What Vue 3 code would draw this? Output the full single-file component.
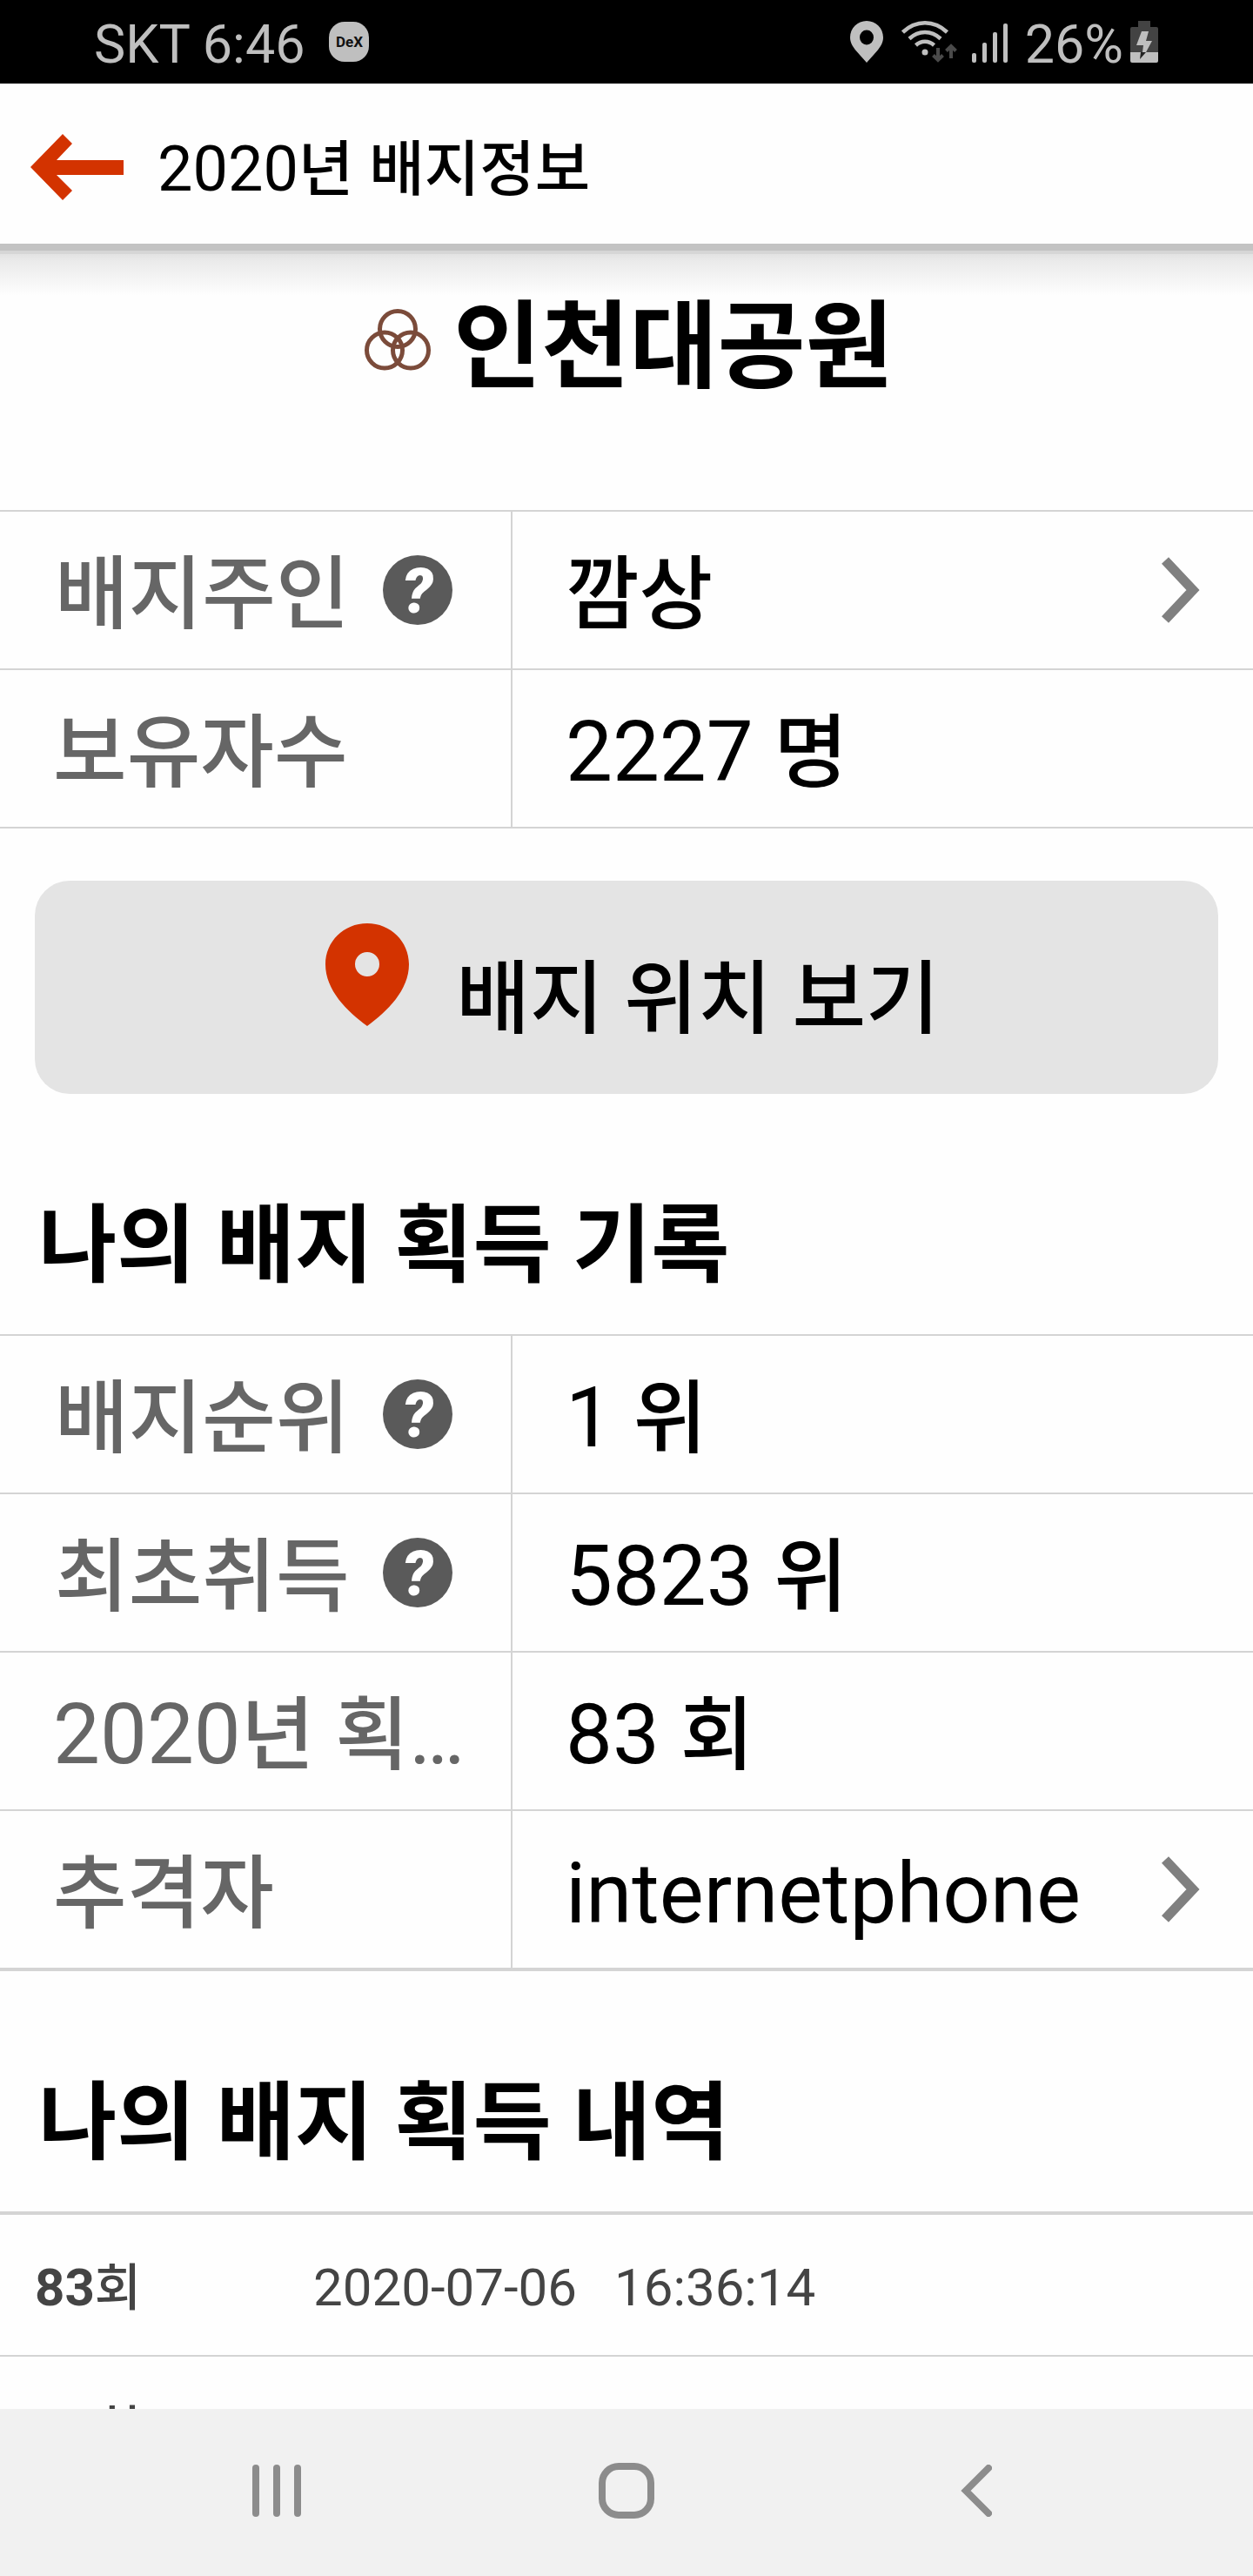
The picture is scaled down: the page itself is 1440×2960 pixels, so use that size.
<script setup>
import { h } from 'vue'

// Splits a string so that Hangul runs get their own optical size beside Latin digits.
const MixedText = (props) =>
  props.text
    .split(/([가-힣]+)/)
    .filter(Boolean)
    .map((run) => (/[가-힣]/.test(run) ? h('span', { class: 'ko' }, run) : run))
MixedText.props = ['text']

const badgeRows = [
  { label: '배지주인', help: true, value: '깜상', link: true },
  { label: '보유자수', value: '2227 명' },
]

const recordRows = [
  { label: '배지순위', help: true, value: '1 위' },
  { label: '최초취득', help: true, value: '5823 위' },
  { label: '2020년 획…', value: '83 회' },
  { label: '추격자', value: 'internetphone', link: true },
]

const tables = { badge: badgeRows, record: recordRows }

const history = [
  { count: '83회', date: '2020-07-06', time: '16:36:14' },
  { count: '82회', date: '', time: '' },
]

const InfoTable = (props) =>
  h(
    'table',
    { class: ['info', props.thick && 'thick'] },
    h(
      'tbody',
      tables[props.name].map((row) =>
        h('tr', [
          h(
            'th',
            { scope: 'row' },
            h('div', { class: 'cell' }, [
              h('span', { class: ['label', row.help && 'inset'] }, h(MixedText, { text: row.label })),
              row.help && h('button', { class: 'help', type: 'button' }, '?'),
            ])
          ),
          h(
            'td',
            h(row.link ? 'a' : 'div', { class: 'cell', href: row.link ? '#' : undefined }, [
              h('span', { class: 'value' }, h(MixedText, { text: row.value })),
              row.link &&
                h('svg', { class: 'chevron', viewBox: '0 0 44 76', width: 44, height: 76 }, [
                  h('path', {
                    d: 'M4 4 L36 38 L4 72',
                    fill: 'none',
                    stroke: '#808080',
                    'stroke-width': 11,
                  }),
                ]),
            ])
          ),
        ])
      )
    )
  )
InfoTable.props = ['name', 'thick']
</script>

<template>
  <div class="screen">
    <div class="status">
      <span class="status-text">SKT 6:46</span>
      <span class="dex">DeX</span>
      <svg class="s-pin" width="38" height="48" viewBox="0 0 38 48">
        <path fill="#bfbfbf" fill-rule="evenodd" d="M19 0C8.500 0 0 8.500 0 19c0 6 3 10.500 7 15.500L19 48l12-13.500c4-5 7-9.500 7-15.500C38 8.500 29.500 0 19 0zm0 10.500a8 8.500 0 1 1 0 17a8 8.500 0 1 1 0-17z" />
      </svg>
      <svg class="s-wifi" width="64" height="48" viewBox="0 0 64 48">
        <g fill="none" stroke="#bfbfbf" stroke-width="4.500">
          <path d="M1.500 13Q13 2.300 27 2.300T52.500 13" />
          <path d="M9 20.500Q17 13 27 13T45 20.500" />
          <path d="M16.500 28Q21 23.800 27 23.800T37.500 28" />
        </g>
        <circle cx="27" cy="36" r="3.500" fill="#bfbfbf" />
        <g fill="none" stroke="#4a4a4a" stroke-width="4">
          <path d="M42 31v14M36.500 39.500l5.500 5.500l5.500-5.500" />
          <path d="M57 43V29M51.500 34.500L57 29l5.500 5.500" />
        </g>
      </svg>
      <svg class="s-bars" width="41" height="48" viewBox="0 0 41 48" fill="#bfbfbf">
        <rect x="0" y="37" width="5" height="11" rx="2" />
        <rect x="12" y="25" width="5" height="23" rx="2" />
        <rect x="24" y="13" width="5" height="35" rx="2" />
        <rect x="36" y="3" width="5" height="45" rx="2" />
      </svg>
      <span class="status-text">26%</span>
      <svg class="s-battery" width="32" height="48" viewBox="0 0 32 48">
        <path fill="#434343" d="M9 0h14v7h7q2 0 2 2v27H0V9q0-2 2-2h7z" />
        <path fill="#bfbfbf" d="M0 36h32v10q0 2-2 2H2q-2 0-2-2z" />
        <path fill="#bfbfbf" d="M13 12h8l-3 11h7L18 36h-4l1-8H7z" />
        <path fill="#222" d="M12 36h6l-7 8z" />
      </svg>
    </div>

    <header class="appbar">
      <button class="back" type="button" aria-label="뒤로">
        <svg width="107" height="76" viewBox="0 0 107 76">
          <path fill="#d33300" d="M0 38L37 0l11 11L30 30h77v17H30l18 18l-11 11z" />
        </svg>
      </button>
      <span class="appbar-title"><MixedText text="2020년 배지정보" /></span>
    </header>

    <main class="content">
      <div class="shade"></div>
      <h1 class="badge-name">
        <svg width="76" height="71" viewBox="0 0 76 71" fill="none" stroke="#7b4b3a" stroke-width="5">
          <circle cx="38" cy="23" r="20.500" />
          <circle cx="23" cy="47.500" r="20.500" />
          <circle cx="53" cy="47.500" r="20.500" />
        </svg>
        <span>인천대공원</span>
      </h1>

      <InfoTable name="badge" />

      <button class="locate" type="button">
        <svg width="96" height="118" viewBox="0 0 96 118">
          <path fill="#d33300" fill-rule="evenodd" d="M48 0C21 0 0 21 0 47c0 30 25 54 48 71c23-17 48-41 48-71C96 21 75 0 48 0zm0 33a14 14 0 1 1 0 28a14 14 0 1 1 0-28z" />
        </svg>
        <span><MixedText text="배지 위치 보기" /></span>
      </button>

      <h2>나의 배지 획득 기록</h2>
      <InfoTable name="record" :thick="true" />

      <h2>나의 배지 획득 내역</h2>
      <ul class="history">
        <li v-for="item in history" :key="item.count">
          <strong><MixedText :text="item.count" /></strong>
          <span>{{ item.date }}</span>
          <span>{{ item.time }}</span>
        </li>
      </ul>
    </main>

    <nav class="navbar">
      <button type="button" aria-label="최근 앱">
        <svg width="56" height="60" viewBox="0 0 56 60" fill="#8c8c8c">
          <rect width="8" height="60" rx="4" />
          <rect x="24" width="8" height="60" rx="4" />
          <rect x="48" width="8" height="60" rx="4" />
        </svg>
      </button>
      <button type="button" aria-label="홈">
        <svg width="64" height="64" viewBox="0 0 64 64" fill="none" stroke="#8c8c8c" stroke-width="8">
          <rect x="4" y="4" width="56" height="56" rx="19" />
        </svg>
      </button>
      <button type="button" aria-label="이전">
        <svg width="36" height="60" viewBox="0 0 36 60" fill="none" stroke="#8c8c8c" stroke-width="8" stroke-linecap="round">
          <path d="M32 4L6 30L32 56" />
        </svg>
      </button>
    </nav>
  </div>
</template>

<style>
body {
  background: #fff;
}
</style>

<style scoped>
.screen {
  display: flex;
  flex-direction: column;
  height: 100vh;
  overflow: hidden;
  background: #fefefe;
  color: #000;
  font-family: Roboto, 'Noto Sans CJK KR', sans-serif;
}
.screen :deep(button) {
  border: 0;
  padding: 0;
  margin: 0;
  background: none;
  color: inherit;
  font-family: inherit;
}
svg {
  display: block;
  flex: none;
}

.status {
  flex: none;
  display: flex;
  align-items: center;
  height: 96px;
  padding: 0 109px 0 108px;
  background: #000;
  color: #bfbfbf;
}
.status-text {
  font-size: 61px;
  line-height: 64px;
  padding-top: 6px;
}
.dex {
  width: 46px;
  height: 46px;
  margin: 0 auto 0 28px;
  border-radius: 18px;
  background: #bfbfbf;
  color: #111;
  font-size: 17px;
  font-weight: 700;
  line-height: 46px;
  text-align: center;
}
.s-wifi {
  margin-left: 21px;
}
.s-bars {
  margin: 0 20px 0 17px;
}
.s-battery {
  margin-left: 8px;
}

.appbar {
  flex: none;
  display: flex;
  align-items: center;
  gap: 39px;
  box-sizing: border-box;
  height: 184px;
  padding: 8px 35px 0;
}
.appbar-title {
  font-size: 72px;
  line-height: 96px;
  padding-top: 6px;
}

.content {
  flex: 1;
  min-height: 0;
  overflow: hidden;
}
.shade {
  height: 60px;
  background: linear-gradient(#c3c3c3 8px, #d6d6d6 8px, #d6d6d6 12px, #e3e3e3 12px, #eaeaea 20px, #fefefe 60px);
}
.badge-name {
  display: flex;
  align-items: center;
  justify-content: center;
  gap: 26px;
  margin: 0;
  padding: 4px 0 130px 6px;
  font-size: 110px;
  font-weight: 700;
  line-height: 112px;
}
.badge-name svg {
  margin-bottom: 20px;
}

.screen :deep(.info) {
  width: 100%;
  border-collapse: separate;
  border-spacing: 0;
  table-layout: fixed;
  border-bottom: 2px solid #d4d4d4;
  font-size: 96px;
  line-height: 120px;
}
.screen :deep(.info.thick) {
  border-bottom-width: 4px;
}
.screen :deep(th),
.screen :deep(td) {
  box-sizing: border-box;
  height: 182px;
  padding: 0 61px;
  border-top: 2px solid #d4d4d4;
  font-weight: 400;
  text-align: left;
}
.screen :deep(th) {
  width: 40.9%;
  padding-right: 40px;
  border-right: 2px solid #d4d4d4;
  color: #666;
}
.screen :deep(.cell) {
  display: flex;
  align-items: center;
  color: inherit;
  text-decoration: none;
}
.screen :deep(.label),
.screen :deep(.value) {
  white-space: nowrap;
  padding-top: 10px;
}
.screen :deep(.inset) {
  padding-left: 2px;
}
.screen :deep(.ko) {
  font-size: 92px;
  font-weight: 500;
}
.screen :deep(.help) {
  flex: none;
  width: 80px;
  height: 80px;
  margin-left: 38px;
  padding-top: 4px;
  border-radius: 50%;
  background: #5a5a5a;
  color: #fff;
  font-size: 72px;
  font-style: italic;
  font-weight: 900;
  line-height: 76px;
}
.screen :deep(.chevron) {
  display: block;
  flex: none;
  margin-left: auto;
}
.screen .appbar-title :deep(.ko) {
  font-size: 69px;
}

.locate {
  display: flex;
  align-items: center;
  justify-content: center;
  gap: 54px;
  width: calc(100% - 80px);
  height: 245px;
}
.screen .locate {
  margin: 60px 40px 0;
  padding: 10px 0 0 14px;
  border-radius: 40px;
  background: #e4e4e4;
  font-size: 96px;
}
.locate svg {
  margin-bottom: 40px;
}

h2 {
  margin: 0;
  padding: 73px 44px 0;
  font-size: 98px;
  font-weight: 700;
  line-height: 203px;
}

.history {
  margin: 0;
  padding: 0;
  list-style: none;
  border-top: 4px solid #d4d4d4;
  color: #444;
  font-size: 60px;
  line-height: 72px;
}
.history li {
  display: flex;
  align-items: center;
  gap: 43px;
  box-sizing: border-box;
  height: 163px;
  padding: 6px 40px 0;
  border-bottom: 2px solid #d4d4d4;
}
.history strong {
  width: 277px;
}
.screen .history :deep(.ko) {
  font-size: 58px;
}

.navbar {
  flex: none;
  display: grid;
  grid-template-columns: repeat(3, 1fr);
  box-sizing: border-box;
  height: 192px;
  padding: 0 117px 4px;
  background: #f1f1f1;
}
.navbar button {
  display: flex;
  align-items: center;
  justify-content: center;
}
</style>
